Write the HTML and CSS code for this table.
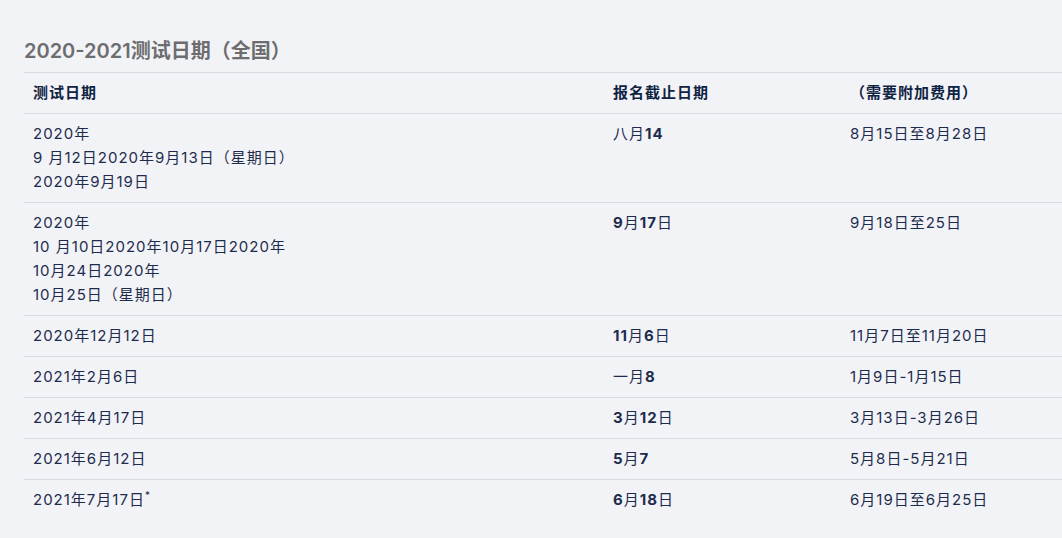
FILE: index.html
```html
<!DOCTYPE html>
<html lang="zh">
<head>
<meta charset="utf-8">
<link rel="stylesheet" href="styles.css">
</head>
<body>
<div class="page">
  <h2 class="title">2020-2021测试日期（全国）</h2>
  <table class="dates">
    <colgroup>
      <col class="c1"><col class="c2"><col class="c3">
    </colgroup>
    <thead>
      <tr><th>测试日期</th><th>报名截止日期</th><th>（需要附加费用）</th></tr>
    </thead>
    <tbody>
      <tr>
        <td>2020年<br>9 月12日2020年9月13日（星期日）<br>2020年9月19日</td>
        <td>八月<b>14</b></td>
        <td>8月15日至8月28日</td>
      </tr>
      <tr>
        <td>2020年<br>10 月10日2020年10月17日2020年<br>10月24日2020年<br>10月25日（星期日）</td>
        <td><b>9</b>月<b>17</b>日</td>
        <td>9月18日至25日</td>
      </tr>
      <tr>
        <td>2020年12月12日</td>
        <td><b>11</b>月<b>6</b>日</td>
        <td>11月7日至11月20日</td>
      </tr>
      <tr>
        <td>2021年2月6日</td>
        <td>一月<b>8</b></td>
        <td>1月9日-1月15日</td>
      </tr>
      <tr>
        <td>2021年4月17日</td>
        <td><b>3</b>月<b>12</b>日</td>
        <td>3月13日-3月26日</td>
      </tr>
      <tr>
        <td>2021年6月12日</td>
        <td><b>5</b>月<b>7</b></td>
        <td>5月8日-5月21日</td>
      </tr>
      <tr>
        <td>2021年7月17日<sup>*</sup></td>
        <td><b>6</b>月<b>18</b>日</td>
        <td>6月19日至6月25日</td>
      </tr>
    </tbody>
  </table>
</div>
</body>
</html>
```

FILE: styles.css
```css
html, body {
  margin: 0;
  padding: 0;
  background: #f2f3f7;
}
body {
  font-family: Inter, "Noto Sans CJK SC", sans-serif;
  color: #1d2c4c;
  font-size: 15px;
}
.page {
  padding: 38px 0 0 24px;
  overflow: hidden;
}
.title {
  margin: 0 0 8px 0;
  font-size: 20px;
  line-height: 26px;
  font-weight: 600;
  color: #6d6d6f;
}
.dates {
  border-collapse: collapse;
  width: 1060px;
}
.c1 { width: 580px; }
.c2 { width: 237px; }
.c3 { width: auto; }
.dates th, .dates td {
  text-align: left;
  vertical-align: top;
  padding: 8px 9px 8px 9px;
  line-height: 24px;
  letter-spacing: 1px;
  border-top: 1px solid #d9dadf;
}
.dates th {
  font-weight: 700;
  color: #0f2342;
}
.dates b {
  font-weight: 700;
}
.dates sup {
  font-size: 10px;
  line-height: 0;
  vertical-align: 6px;
}
```
